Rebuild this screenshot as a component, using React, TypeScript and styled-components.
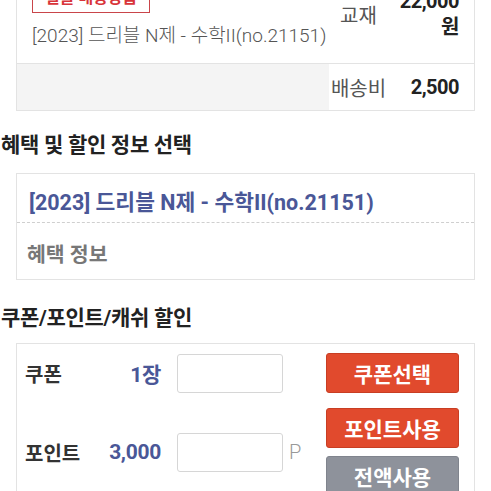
import React from 'react';
import styled, { createGlobalStyle } from 'styled-components';

const colors = {
  border: '#e3e3e3',
  text: '#333',
  grey: '#555',
  light: '#777',
  blue: '#4a5797',
  red: '#e14a2d',
  redDark: '#c83e23',
  slate: '#8e929b',
  shade: '#f4f4f4',
};

const GlobalStyle = createGlobalStyle`
  body {
    margin: 0;
    background: #fff;
    font-family: Roboto, "Noto Sans CJK KR", sans-serif;
    color: ${colors.text};
  }
`;

const App = () => (
  <Page>
    <GlobalStyle />

    <Card>
      <OrderGrid>
        <ItemInfo>
          <Badge>실물 배송상품</Badge>
          <ItemTitle>[2023] 드리블 N제 - 수학II(no.21151)</ItemTitle>
        </ItemInfo>
        <KindCell>교재</KindCell>
        <PriceCell>
          22,000
          <br />원
        </PriceCell>

        <ShadeCell />
        <KindCell $bordered>배송비</KindCell>
        <PriceCell $bordered>2,500</PriceCell>
      </OrderGrid>
    </Card>

    <SectionTitle>혜택 및 할인 정보 선택</SectionTitle>
    <Card>
      <BenefitRow $dashed>
        <BenefitTitle>[2023] 드리블 N제 - 수학II(no.21151)</BenefitTitle>
      </BenefitRow>
      <BenefitRow>
        <BenefitLabel>혜택 정보</BenefitLabel>
      </BenefitRow>
    </Card>

    <SectionTitle $tight>쿠폰/포인트/캐쉬 할인</SectionTitle>
    <DiscountCard>
      <DiscountRow>
        <FieldLabel>쿠폰</FieldLabel>
        <FieldValue>1장</FieldValue>
        <FieldInput />
        <Unit />
        <ButtonStack>
          <ActionButton>쿠폰선택</ActionButton>
        </ButtonStack>
      </DiscountRow>
      <DiscountRow>
        <FieldLabel>포인트</FieldLabel>
        <FieldValue>3,000</FieldValue>
        <FieldInput />
        <Unit>P</Unit>
        <ButtonStack>
          <ActionButton>포인트사용</ActionButton>
          <ActionButton $muted>전액사용</ActionButton>
        </ButtonStack>
      </DiscountRow>
    </DiscountCard>
  </Page>
);

export default App;

const Page = styled.div`
  margin-top: -41px;
  padding-bottom: 40px;
`;

const Card = styled.div`
  margin: 0 16px;
  border: 1px solid ${colors.border};
  background: #fff;
`;

const OrderGrid = styled.div`
  display: grid;
  grid-template-columns: 1fr 59px 86px;
  align-items: center;
`;

const ItemInfo = styled.div`
  padding: 23px 0 15px 15px;
`;

const Badge = styled.div`
  display: inline-block;
  height: 30px;
  line-height: 28px;
  box-sizing: border-box;
  padding: 0 12px;
  border: 1px solid #c9454a;
  color: #d8343a;
  font-size: 16px;
  font-weight: 700;
`;

const ItemTitle = styled.div`
  margin-top: 11px;
  font-size: 19px;
  line-height: 24px;
  color: ${colors.grey};
  font-weight: 300;
  white-space: nowrap;
`;

const KindCell = styled.div<{ $bordered?: boolean }>`
  align-self: stretch;
  display: flex;
  align-items: center;
  justify-content: center;
  box-sizing: border-box;
  padding-top: ${(p) => (p.$bordered ? 0 : 5)}px;
  border-top: ${(p) => (p.$bordered ? `1px solid ${colors.border}` : 'none')};
  height: ${(p) => (p.$bordered ? '47px' : 'auto')};
  font-size: 20px;
  color: ${colors.grey};
  white-space: nowrap;
`;

const PriceCell = styled.div<{ $bordered?: boolean }>`
  align-self: stretch;
  display: flex;
  align-items: center;
  justify-content: flex-end;
  text-align: right;
  box-sizing: border-box;
  padding-right: 15px;
  padding-top: ${(p) => (p.$bordered ? 0 : 4)}px;
  border-top: ${(p) => (p.$bordered ? `1px solid ${colors.border}` : 'none')};
  font-size: 20px;
  line-height: 26px;
  font-weight: 700;
  color: #222;
  letter-spacing: -0.5px;
`;

const ShadeCell = styled.div`
  align-self: stretch;
  background: ${colors.shade};
  border-top: 1px solid ${colors.border};
`;

const SectionTitle = styled.h2<{ $tight?: boolean }>`
  margin: ${(p) => (p.$tight ? '24px 0 11px' : '20px 0 14px')};
  padding-left: 1px;
  font-size: 21px;
  line-height: 28px;
  font-weight: 700;
  color: #222;
  letter-spacing: -0.3px;
`;

const BenefitRow = styled.div<{ $dashed?: boolean }>`
  display: flex;
  align-items: center;
  box-sizing: border-box;
  height: ${(p) => (p.$dashed ? 49 : 56)}px;
  padding: 4px 12px 0;
  border-bottom: ${(p) => (p.$dashed ? '1px dashed #cfcfcf' : 'none')};
`;

const BenefitTitle = styled.div`
  font-size: 21.5px;
  font-weight: 700;
  color: ${colors.blue};
  white-space: nowrap;
`;

const BenefitLabel = styled.div`
  margin-left: -2px;
  font-size: 20.5px;
  font-weight: 700;
  color: ${colors.light};
`;

const DiscountCard = styled(Card)`
  display: flex;
  flex-direction: column;
  gap: 15px;
  padding: 9px 15px 12px 8px;
`;

const DiscountRow = styled.div`
  display: flex;
  align-items: center;
`;

const FieldLabel = styled.div`
  width: 55px;
  font-size: 20px;
  font-weight: 700;
  color: #333;
  white-space: nowrap;
`;

const FieldValue = styled.div`
  width: 81px;
  text-align: right;
  font-size: 21px;
  font-weight: 700;
  color: ${colors.blue};
  letter-spacing: -0.3px;
`;

const FieldInput = styled.input`
  box-sizing: border-box;
  width: 106px;
  height: 39px;
  margin-left: 16px;
  border: 1px solid #d6d6d6;
  border-radius: 3px;
  background: #fff;
`;

const Unit = styled.span`
  margin-left: 6px;
  font-size: 20px;
  font-weight: 300;
  color: #999;
`;

const ButtonStack = styled.div`
  margin-left: auto;
  display: flex;
  flex-direction: column;
  gap: 8px;
`;

const ActionButton = styled.button<{ $muted?: boolean }>`
  box-sizing: border-box;
  width: 133px;
  height: 40px;
  border-radius: 3px;
  border: 1px solid ${(p) => (p.$muted ? '#80848d' : colors.redDark)};
  background: ${(p) => (p.$muted ? colors.slate : colors.red)};
  color: #fff;
  font-family: inherit;
  font-size: 21px;
  font-weight: 700;
  padding: 0;
`;
